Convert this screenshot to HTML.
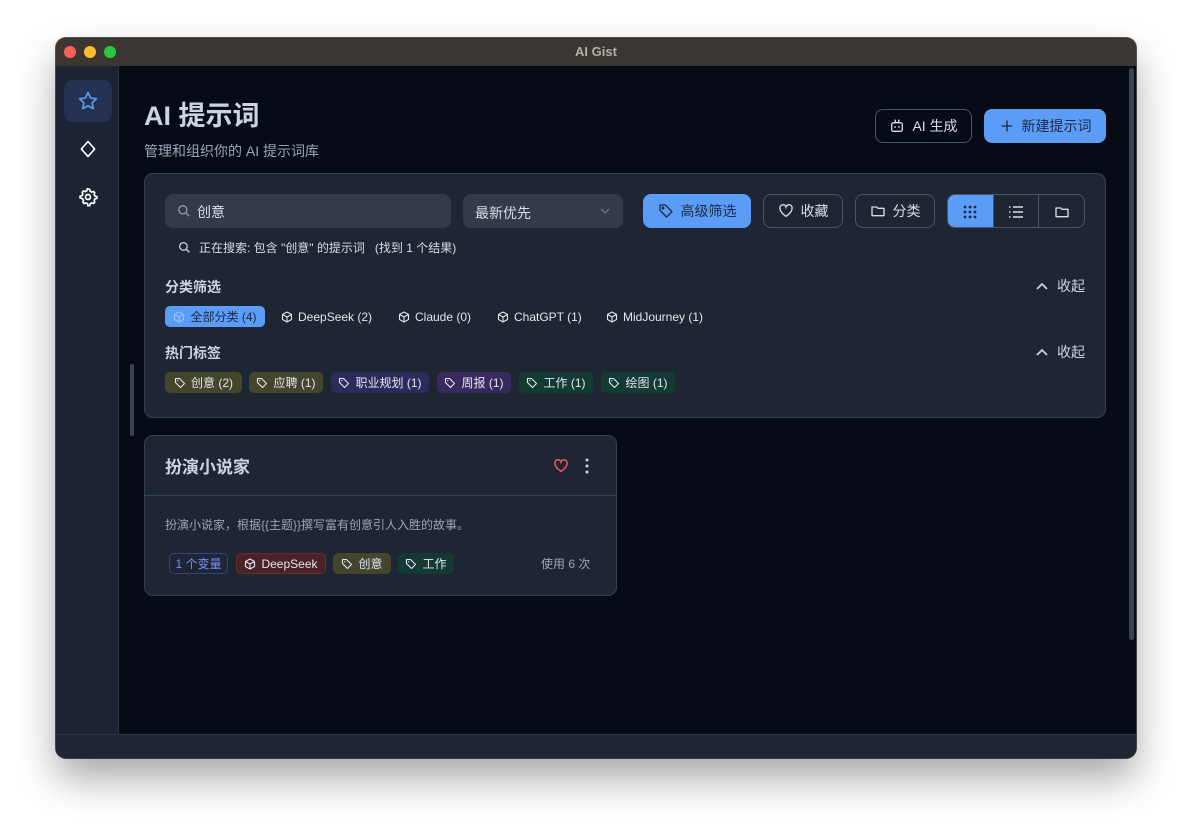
<!DOCTYPE html>
<html><head><meta charset="utf-8"><style>
*{box-sizing:border-box;margin:0;padding:0}
body{width:1192px;height:832px;background:#fff;font-family:"Liberation Sans","Noto Sans CJK SC",sans-serif;position:relative;overflow:hidden;color:#cbd5e1}
.a{position:absolute}
.win{left:56px;top:38px;width:1080px;height:720px;border-radius:10px;overflow:hidden;background:#070b16;box-shadow:0 20px 40px rgba(0,0,0,.35),0 0 0 1px #555}
.title{left:0;top:0;width:1080px;height:28px;background:#3b3632;text-align:center;font-size:13px;font-weight:bold;color:#b5aea8;line-height:28px}
.dot{top:8px;width:12px;height:12px;border-radius:50%}
.side{left:0;top:28px;width:63px;height:668px;background:#1c2433;border-right:1px solid #2a3342}
.bottom{left:0;top:696px;width:1080px;height:24px;background:#1e2533;border-top:1px solid #2b3444}
.panel{background:#1e2533;border:1px solid #334155;border-radius:9px}
.btn{border:1px solid #4b5567;border-radius:8px;display:flex;align-items:center;justify-content:center;gap:7px;font-size:14px;color:#d8dee8;height:34px}
.blue{background:#5b9cf6;border-color:#5b9cf6;color:#1e2a44}
.chip{display:inline-flex;align-items:center;justify-content:center;gap:5px;height:21px;border-radius:5px;font-size:12px;color:#e2e8f0;position:absolute;top:0;white-space:nowrap}
.nb{justify-content:flex-start}
svg{display:block}
</style></head><body>
<svg width="0" height="0" style="position:absolute">
 <defs>
  <symbol id="tag" viewBox="0 0 24 24"><path d="M3 3h8l10 10-8 8L3 11z" fill="none" stroke="currentColor" stroke-width="2.2" stroke-linejoin="round"/><circle cx="7.5" cy="7.5" r="1.3" fill="currentColor"/></symbol>
  <symbol id="cube" viewBox="0 0 24 24"><path d="M12 2l9 5v10l-9 5-9-5V7zM3 7l9 5 9-5M12 12v10" fill="none" stroke="currentColor" stroke-width="2.2" stroke-linejoin="round"/></symbol>
 </defs>
</svg>
<div class="a win">
 <div class="a title">AI Gist</div>
 <div class="a dot" style="left:8px;background:#fe5f57"></div>
 <div class="a dot" style="left:28px;background:#febc2e"></div>
 <div class="a dot" style="left:48px;background:#28c840"></div>
 <div class="a side">
  <div class="a" style="left:8px;top:14px;width:48px;height:42px;border-radius:9px;background:#243352"></div>
  <svg class="a" style="left:22px;top:25px" width="20" height="20" viewBox="0 0 24 24" fill="none" stroke="#5b9cf6" stroke-width="2" stroke-linejoin="round"><path d="M12 2l3.1 6.3 6.9 1-5 4.9 1.2 6.8L12 17.8 5.8 21l1.2-6.8-5-4.9 6.9-1z"/></svg>
  <svg class="a" style="left:22px;top:73px" width="20" height="20" viewBox="0 0 24 24" fill="none" stroke="#fff" stroke-width="2" stroke-linejoin="round"><path d="M12 3l8 9-8 9-8-9z"/></svg>
  <svg class="a" style="left:22px;top:121px" width="20" height="20" viewBox="0 0 24 24" fill="none" stroke="#fff" stroke-width="2"><circle cx="12" cy="12" r="3"/><path d="M12 2.5l2 .3.6 2.3 1.8 1 2.3-.7 1.4 1.5-.7 2.3 1 1.8 2.3.6v2l-2.3.6-1 1.8.7 2.3-1.4 1.5-2.3-.7-1.8 1-.6 2.3h-2l-.6-2.3-1.8-1-2.3.7-1.4-1.5.7-2.3-1-1.8L2.5 13v-2l2.3-.6 1-1.8-.7-2.3 1.4-1.5 2.3.7 1.8-1 .6-2.3z"/></svg>
 </div>
 <div class="a" style="left:74px;top:326px;width:4px;height:72px;border-radius:2px;background:#3a4150"></div>
 <div class="a" style="left:1073px;top:30px;width:5px;height:572px;border-radius:3px;background:#3a4150"></div>

 <div class="a" style="left:88px;top:56px;font-size:27px;font-weight:bold;color:#cbd5e1">AI 提示词</div>
 <div class="a" style="left:88px;top:103px;font-size:14px;color:#9aa5b6">管理和组织你的 AI 提示词库</div>
 <div class="a btn" style="left:819px;top:71px;width:97px"><svg width="16" height="16" viewBox="0 0 24 24" fill="none" stroke="#d8dee8" stroke-width="2" stroke-linecap="round"><rect x="4" y="7" width="16" height="13" rx="3"/><path d="M9 3l1 4M15 3l-1 4M9 13v1M15 13v1"/></svg>AI 生成</div>
 <div class="a btn blue" style="left:928px;top:71px;width:122px"><svg width="16" height="16" viewBox="0 0 24 24" fill="none" stroke="#1e2a44" stroke-width="2"><path d="M12 4v16M4 12h16"/></svg>新建提示词</div>

 <div class="a panel" style="left:88px;top:135px;width:962px;height:245px">
  <div class="a" style="left:20px;top:20px;width:286px;height:34px;border-radius:8px;background:#333b4a"></div>
  <svg class="a" style="left:32px;top:30px" width="14" height="14" viewBox="0 0 24 24" fill="none" stroke="#9aa5b6" stroke-width="2"><circle cx="10" cy="10" r="7"/><path d="M15 15l6 6"/></svg>
  <div class="a" style="left:52px;top:28px;font-size:14px;color:#d8dee8">创意</div>
  <div class="a" style="left:318px;top:20px;width:160px;height:34px;border-radius:8px;background:#333b4a"></div>
  <div class="a" style="left:330px;top:29px;font-size:14px;color:#d8dee8">最新优先</div>
  <svg class="a" style="left:455px;top:33px" width="10" height="8" viewBox="0 0 10 8" fill="none" stroke="#6b7588" stroke-width="1.3"><path d="M1 2l4 4 4-4"/></svg>
  <svg class="a" style="left:33px;top:67px" width="13" height="13" viewBox="0 0 24 24" fill="none" stroke="#cbd5e1" stroke-width="2.4"><circle cx="10" cy="10" r="7"/><path d="M15 15l6 6"/></svg>
  <div class="a" style="left:54px;top:65px;font-size:12px;color:#d8dee8;white-space:pre">正在搜索: 包含 "创意" 的提示词   (找到 1 个结果)</div>
  <div class="a btn blue" style="left:498px;top:20px;width:108px"><svg width="16" height="16" viewBox="0 0 24 24" fill="none" stroke="#1e2a44" stroke-width="2" stroke-linejoin="round"><path d="M3 3h8l10 10-8 8L3 11z"/><circle cx="7.5" cy="7.5" r="1.2"/></svg>高级筛选</div>
  <div class="a btn" style="left:618px;top:20px;width:80px"><svg width="16" height="16" viewBox="0 0 24 24" fill="none" stroke="#d8dee8" stroke-width="2"><path d="M12 20S3 14.5 3 8.5A4.5 4.5 0 0112 6a4.5 4.5 0 019 2.5C21 14.5 12 20 12 20z"/></svg>收藏</div>
  <div class="a btn" style="left:710px;top:20px;width:80px"><svg width="16" height="16" viewBox="0 0 24 24" fill="none" stroke="#d8dee8" stroke-width="2" stroke-linejoin="round"><path d="M3 6h7l2 2h9v11H3z"/></svg>分类</div>
  <div class="a" style="left:802px;top:20px;width:138px;height:34px;border:1px solid #4b5567;border-radius:8px;overflow:hidden">
   <div class="a" style="left:0;top:0;width:46px;height:34px;background:#5b9cf6"></div>
   <div class="a" style="left:45px;top:0;width:1px;height:34px;background:#4b5567"></div>
   <div class="a" style="left:90px;top:0;width:1px;height:34px;background:#4b5567"></div>
   <svg class="a" style="left:15px;top:10px" width="14" height="14" viewBox="0 0 14 14" fill="#1e2a44"><circle cx="2" cy="2" r="1.4"/><circle cx="7" cy="2" r="1.4"/><circle cx="12" cy="2" r="1.4"/><circle cx="2" cy="7" r="1.4"/><circle cx="7" cy="7" r="1.4"/><circle cx="12" cy="7" r="1.4"/><circle cx="2" cy="12" r="1.4"/><circle cx="7" cy="12" r="1.4"/><circle cx="12" cy="12" r="1.4"/></svg>
   <svg class="a" style="left:61px;top:10px" width="14" height="14" viewBox="0 0 14 14" stroke="#d8dee8" stroke-width="1.4"><path d="M4 2h10M4 7h10M4 12h10M0 2h1.5M0 7h1.5M0 12h1.5"/></svg>
   <svg class="a" style="left:106px;top:9px" width="16" height="16" viewBox="0 0 24 24" fill="none" stroke="#d8dee8" stroke-width="2" stroke-linejoin="round"><path d="M3 6h7l2 2h9v11H3z"/></svg>
  </div>

  <div class="a" style="left:20px;top:103px;font-size:14px;font-weight:bold;color:#cbd5e1">分类筛选</div>
  <svg class="a" style="left:891px;top:108px" width="12" height="8" viewBox="0 0 12 8" fill="none" stroke="#cbd5e1" stroke-width="1.8"><path d="M1 7l5-5 5 5"/></svg>
  <div class="a" style="left:912px;top:102px;font-size:14px;color:#cbd5e1">收起</div>
  <div class="a" style="left:20px;top:132px;width:900px;height:22px">
   <span class="chip" style="left:0;width:100px;background:#5b9cf6;color:#1e2a44"><svg width="12" height="12" style="color:#93c5fd"><use href="#cube"/></svg>全部分类 (4)</span>
   <span class="chip nb" style="left:116px"><svg width="12" height="12"><use href="#cube"/></svg>DeepSeek (2)</span>
   <span class="chip nb" style="left:233px"><svg width="12" height="12"><use href="#cube"/></svg>Claude (0)</span>
   <span class="chip nb" style="left:332px"><svg width="12" height="12"><use href="#cube"/></svg>ChatGPT (1)</span>
   <span class="chip nb" style="left:441px"><svg width="12" height="12"><use href="#cube"/></svg>MidJourney (1)</span>
  </div>
  <div class="a" style="left:20px;top:169px;font-size:14px;font-weight:bold;color:#cbd5e1">热门标签</div>
  <svg class="a" style="left:891px;top:174px" width="12" height="8" viewBox="0 0 12 8" fill="none" stroke="#cbd5e1" stroke-width="1.8"><path d="M1 7l5-5 5 5"/></svg>
  <div class="a" style="left:912px;top:168px;font-size:14px;color:#cbd5e1">收起</div>
  <div class="a" style="left:20px;top:198px;width:900px;height:22px">
   <span class="chip" style="left:0;width:77px;background:#45442c"><svg width="12" height="12"><use href="#tag"/></svg>创意 (2)</span>
   <span class="chip" style="left:84px;width:74px;background:#45442c"><svg width="12" height="12"><use href="#tag"/></svg>应聘 (1)</span>
   <span class="chip" style="left:166px;width:98px;background:#2e2b5c"><svg width="12" height="12"><use href="#tag"/></svg>职业规划 (1)</span>
   <span class="chip" style="left:272px;width:74px;background:#382a5c"><svg width="12" height="12"><use href="#tag"/></svg>周报 (1)</span>
   <span class="chip" style="left:354px;width:74px;background:#143a34"><svg width="12" height="12"><use href="#tag"/></svg>工作 (1)</span>
   <span class="chip" style="left:436px;width:74px;background:#143a34"><svg width="12" height="12"><use href="#tag"/></svg>绘图 (1)</span>
  </div>
 </div>

 <div class="a panel" style="left:88px;top:397px;width:473px;height:161px">
  <div class="a" style="left:20px;top:17px;font-size:17px;font-weight:bold;color:#cbd5e1">扮演小说家</div>
  <svg class="a" style="left:408px;top:22px" width="16" height="16" viewBox="0 0 24 24" fill="none" stroke="#f05a5a" stroke-width="2.2"><path d="M12 20S3 14.5 3 8.5A4.5 4.5 0 0112 6a4.5 4.5 0 019 2.5C21 14.5 12 20 12 20z"/></svg>
  <svg class="a" style="left:440px;top:22px" width="4" height="16" viewBox="0 0 4 16" fill="#cbd5e1"><circle cx="2" cy="2" r="1.5"/><circle cx="2" cy="8" r="1.5"/><circle cx="2" cy="14" r="1.5"/></svg>
  <div class="a" style="left:0;top:59px;width:471px;height:1px;background:#334155"></div>
  <div class="a" style="left:20px;top:80px;font-size:12px;color:#9aa5b6">扮演小说家，根据{{主题}}撰写富有创意引人入胜的故事。</div>
  <div class="a" style="left:24px;top:117px;width:400px;height:22px">
   <span class="chip" style="left:0;width:59px;border:1px solid #3b3f8a;color:#818cf8">1 个变量</span>
   <span class="chip" style="left:67px;width:90px;background:#4a2228;border:1px solid #6b2a30"><svg width="12" height="12"><use href="#cube"/></svg>DeepSeek</span>
   <span class="chip" style="left:164px;width:58px;background:#45442c"><svg width="12" height="12"><use href="#tag"/></svg>创意</span>
   <span class="chip" style="left:229px;width:56px;background:#143a34"><svg width="12" height="12"><use href="#tag"/></svg>工作</span>
  </div>
  <div class="a" style="left:396px;top:119px;font-size:12px;color:#9aa5b6">使用 6 次</div>
 </div>
 <div class="a bottom"></div>
</div>
</body></html>
